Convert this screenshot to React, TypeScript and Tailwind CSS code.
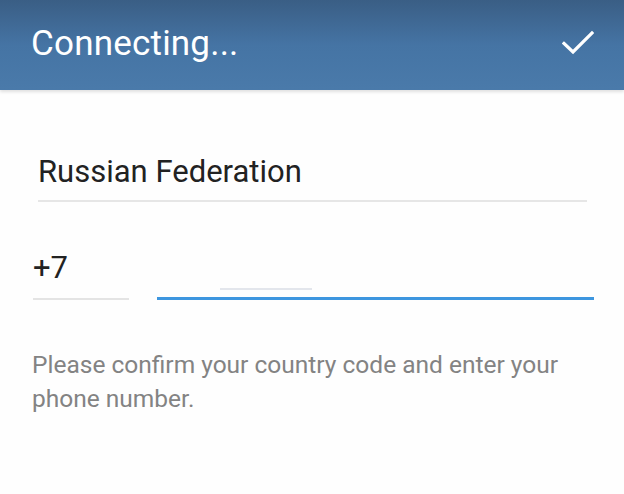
export default function App() {
  return (
    <div
      className="w-[624px] h-[494px] bg-[#fefefe] overflow-hidden"
      style={{ fontFamily: 'Roboto, "Liberation Sans", sans-serif' }}
    >
      <header className="h-[90px] flex items-center justify-between pl-[31px] pr-[30px] bg-gradient-to-b from-[#3a5e85] via-[#4574a4] to-[#4a7aaa] shadow-[0_2px_3px_rgba(0,0,0,0.12)]">
        <h1 className="text-[35px] text-white tracking-[0.2px] pb-[2px]">Connecting...</h1>
        <svg width="32" height="26" viewBox="0 0 32 26" fill="none" className="mt-[-4px]">
          <path d="M2 13.5 L11 22 L30 3" stroke="white" strokeWidth="3.2" strokeLinecap="square" />
        </svg>
      </header>

      <div className="px-[32px] pt-[64px]">
        <div className="ml-[6px] mr-[5px] border-b-2 border-[#e6e6e6] pb-[10px]">
          <p className="text-[31px] leading-[36px] text-[#222]">Russian Federation</p>
        </div>

        <div className="flex items-end mt-[48px]">
          <div className="w-[96px] ml-[1px] border-b-2 border-[#e4e4e4] pb-[12px]">
            <p className="text-[31px] leading-[36px] text-[#222]">+7</p>
          </div>
          <div className="flex-1 ml-[28px] mr-[-2px] flex flex-col">
            <div className="h-[2px] w-[92px] ml-[63px] mb-[7px] bg-[#e3e6ec]" />
            <div className="h-[3px] bg-[#3d96df]" />
          </div>
        </div>

        <p className="mt-[48px] text-[24.5px] leading-[34px] text-[#838383]">
          Please confirm your country code and enter your phone number.
        </p>
      </div>
    </div>
  );
}
